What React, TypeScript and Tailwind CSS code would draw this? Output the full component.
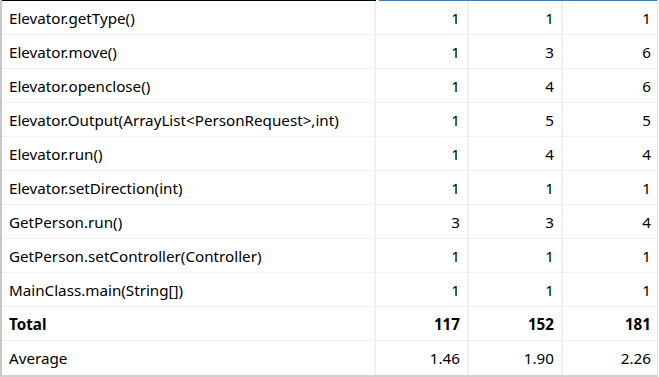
import React from 'react';

type Row = { name: string; a: string; b: string; c: string; bold?: boolean };

const rows: Row[] = [
  { name: 'Elevator.getType()', a: '1', b: '1', c: '1' },
  { name: 'Elevator.move()', a: '1', b: '3', c: '6' },
  { name: 'Elevator.openclose()', a: '1', b: '4', c: '6' },
  { name: 'Elevator.Output(ArrayList<PersonRequest>,int)', a: '1', b: '5', c: '5' },
  { name: 'Elevator.run()', a: '1', b: '4', c: '4' },
  { name: 'Elevator.setDirection(int)', a: '1', b: '1', c: '1' },
  { name: 'GetPerson.run()', a: '3', b: '3', c: '4' },
  { name: 'GetPerson.setController(Controller)', a: '1', b: '1', c: '1' },
  { name: 'MainClass.main(String[])', a: '1', b: '1', c: '1' },
  { name: 'Total', a: '117', b: '152', c: '181', bold: true },
  { name: 'Average', a: '1.46', b: '1.90', c: '2.26' },
];

const App: React.FC = () => {
  return (
    <div
      className="w-[659px] h-[377px] bg-white overflow-hidden text-[15.2px] text-black"
      style={{ fontFamily: '"Noto Sans", "Open Sans", sans-serif' }}
    >
      <div className="w-[658px] border-l-2 border-l-[#c8c8c8] border-b-2 border-b-[#d0d0d0] border-r border-r-[#e4e4e4]">
        {/* header strip */}
        <div className="flex h-px">
          <div className="w-[374px] bg-black" />
          <div className="w-[3px] bg-white" />
          <div className="flex-1 bg-[#1a86d8]" />
        </div>
        {rows.map((r, i) => (
          <div
            key={r.name}
            className={`flex h-[34px] ${i < rows.length - 1 ? 'border-b border-[#f0f0f0]' : ''} ${r.bold ? 'font-bold' : ''}`}
          >
            <div className="w-[374px] pl-[7px] pt-px flex items-center border-r-2 border-[#f0f0f0] whitespace-nowrap">
              {r.name}
            </div>
            <div className="w-[93px] pr-[7px] pt-px flex items-center justify-end border-r-2 border-[#f0f0f0]">
              {r.a}
            </div>
            <div className="w-[94px] pr-[7px] pt-px flex items-center justify-end border-r-2 border-[#f0f0f0]">
              {r.b}
            </div>
            <div className="flex-1 pr-[6px] pt-px flex items-center justify-end">{r.c}</div>
          </div>
        ))}
      </div>
    </div>
  );
};

export default App;
